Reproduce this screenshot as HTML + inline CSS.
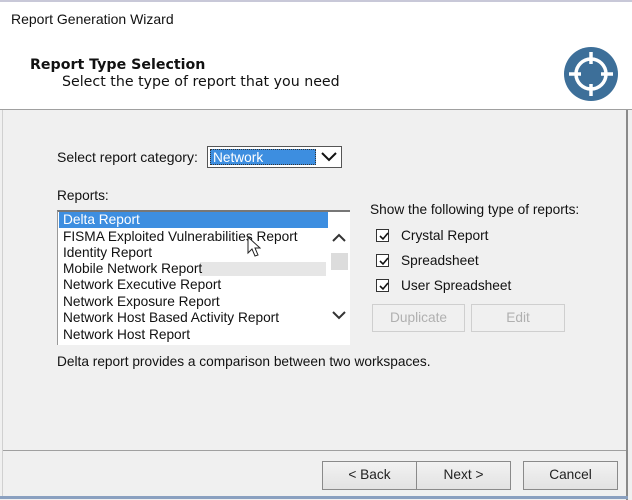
<!DOCTYPE html>
<html><head><style>
body{margin:0;width:632px;height:500px;overflow:hidden;background:#f0f0f0;font-family:"Liberation Sans",sans-serif;font-size:13.7px;color:#111;position:relative}
.a{position:absolute;white-space:nowrap}
.btn{position:absolute;border:1px solid #8a8a8a;background:linear-gradient(#f2f2f2,#e2e2e2);text-align:center;box-sizing:border-box;line-height:26px;font-size:13.7px;color:#222}
.dis{border-color:#cfcfcf;background:#f0f0f0;color:#b0b0b0}
.cb{position:absolute;left:376px;width:13px;height:13px;border:1px solid #333;background:#fff;box-sizing:border-box}
.cb svg{position:absolute;left:1px;top:1px}
.it{position:absolute;left:63px;font-size:13.7px;line-height:16px;white-space:nowrap}
</style></head><body>
<div class="a" style="left:0;top:0;width:632px;height:109px;background:#fff;border-bottom:1px solid #a0a0a0"></div>
<div class="a" style="left:0;top:0;width:632px;height:2px;background:#c8c8d8"></div>
<div class="a" style="left:11px;top:11px;font-size:14px">Report Generation Wizard</div>
<div class="a" style="left:30px;top:57px;font-size:14.2px;font-weight:bold;font-family:'DejaVu Sans',sans-serif">Report Type Selection</div>
<div class="a" style="left:62px;top:74px;font-size:14.2px;font-family:'DejaVu Sans',sans-serif">Select the type of report that you need</div>
<svg class="a" style="left:563px;top:46px" width="56" height="56" viewBox="0 0 56 56">
<circle cx="28" cy="28" r="27" fill="#3d6f99"/>
<circle cx="28" cy="28" r="15" fill="none" stroke="#fff" stroke-width="3.5"/>
<path d="M28 6v12M28 38v12M6 28h12M38 28h12" stroke="#fff" stroke-width="3.5"/>
</svg>
<div class="a" style="left:626px;top:110px;width:2px;height:390px;background:#8a8a8a"></div>
<div class="a" style="left:2px;top:110px;width:1px;height:388px;background:#d0d0d0"></div>
<div class="a" style="left:57px;top:149px;font-size:14px">Select report category:</div>
<div class="a" style="left:207px;top:146px;width:135px;height:22px;border:1px solid #555;background:#fff;box-sizing:border-box"></div>
<div class="a" style="left:210px;top:149px;width:106px;height:16px;background:#3d8ee0;color:#fff;line-height:16px;padding-left:2px;box-sizing:border-box;border:1px dotted #333">Network</div>
<svg class="a" style="left:320px;top:150px" width="18" height="14"><path d="M2 3l7 7 7-7" stroke="#111" stroke-width="2" fill="none"/></svg>
<div class="a" style="left:57px;top:188px">Reports:</div>
<div class="a" style="left:57px;top:210px;width:293px;height:135px;background:#fff;border-top:2px solid #777;border-left:1px solid #999;box-sizing:border-box"></div>
<div class="a" style="left:59px;top:212px;width:269px;height:16px;background:#3d8ee0"></div>
<div class="a" style="left:200px;top:262px;width:126px;height:14px;background:#e6e6e6"></div>
<div class="a" style="left:331px;top:253px;width:17px;height:17px;background:#dcdcdc"></div>
<div class="it" style="top:212px;color:#fff">Delta Report</div>
<div class="it" style="top:229px">FISMA Exploited Vulnerabilities Report</div>
<div class="it" style="top:245px">Identity Report</div>
<div class="it" style="top:261px">Mobile Network Report</div>
<div class="it" style="top:277px">Network Executive Report</div>
<div class="it" style="top:294px">Network Exposure Report</div>
<div class="it" style="top:310px">Network Host Based Activity Report</div>
<div class="it" style="top:327px">Network Host Report</div>
<svg class="a" style="left:331px;top:232px" width="16" height="12"><path d="M2 9l6-6 6 6" stroke="#333" stroke-width="2" fill="none"/></svg>
<svg class="a" style="left:331px;top:309px" width="16" height="12"><path d="M2 3l6 6 6-6" stroke="#333" stroke-width="2" fill="none"/></svg>
<svg class="a" style="left:247px;top:236px" width="14" height="22"><path d="M1 1v16l4-4 3 7 3-1-3-7h5z" fill="#fff" stroke="#222"/></svg>
<div class="a" style="left:370px;top:202px">Show the following type of reports:</div>
<div class="cb" style="top:229px"><svg width="11" height="11"><path d="M2 5l3 3 5-6" stroke="#111" stroke-width="1.6" fill="none"/></svg></div>
<div class="a" style="left:401px;top:228px">Crystal Report</div>
<div class="cb" style="top:254px"><svg width="11" height="11"><path d="M2 5l3 3 5-6" stroke="#111" stroke-width="1.6" fill="none"/></svg></div>
<div class="a" style="left:401px;top:253px">Spreadsheet</div>
<div class="cb" style="top:279px"><svg width="11" height="11"><path d="M2 5l3 3 5-6" stroke="#111" stroke-width="1.6" fill="none"/></svg></div>
<div class="a" style="left:401px;top:278px">User Spreadsheet</div>
<div class="btn dis" style="left:372px;top:304px;width:93px;height:28px">Duplicate</div>
<div class="btn dis" style="left:471px;top:304px;width:94px;height:28px">Edit</div>
<div class="a" style="left:57px;top:354px">Delta report provides a comparison between two workspaces.</div>
<div class="a" style="left:3px;top:450px;width:623px;height:1px;background:#a0a0a0"></div>
<div class="btn" style="left:322px;top:461px;width:95px;height:29px">&lt; Back</div>
<div class="btn" style="left:416px;top:461px;width:95px;height:29px">Next &gt;</div>
<div class="btn" style="left:523px;top:461px;width:95px;height:29px">Cancel</div>
<div class="a" style="left:0;top:496px;width:628px;height:3px;background:#8aa0c0"></div>
</body></html>
